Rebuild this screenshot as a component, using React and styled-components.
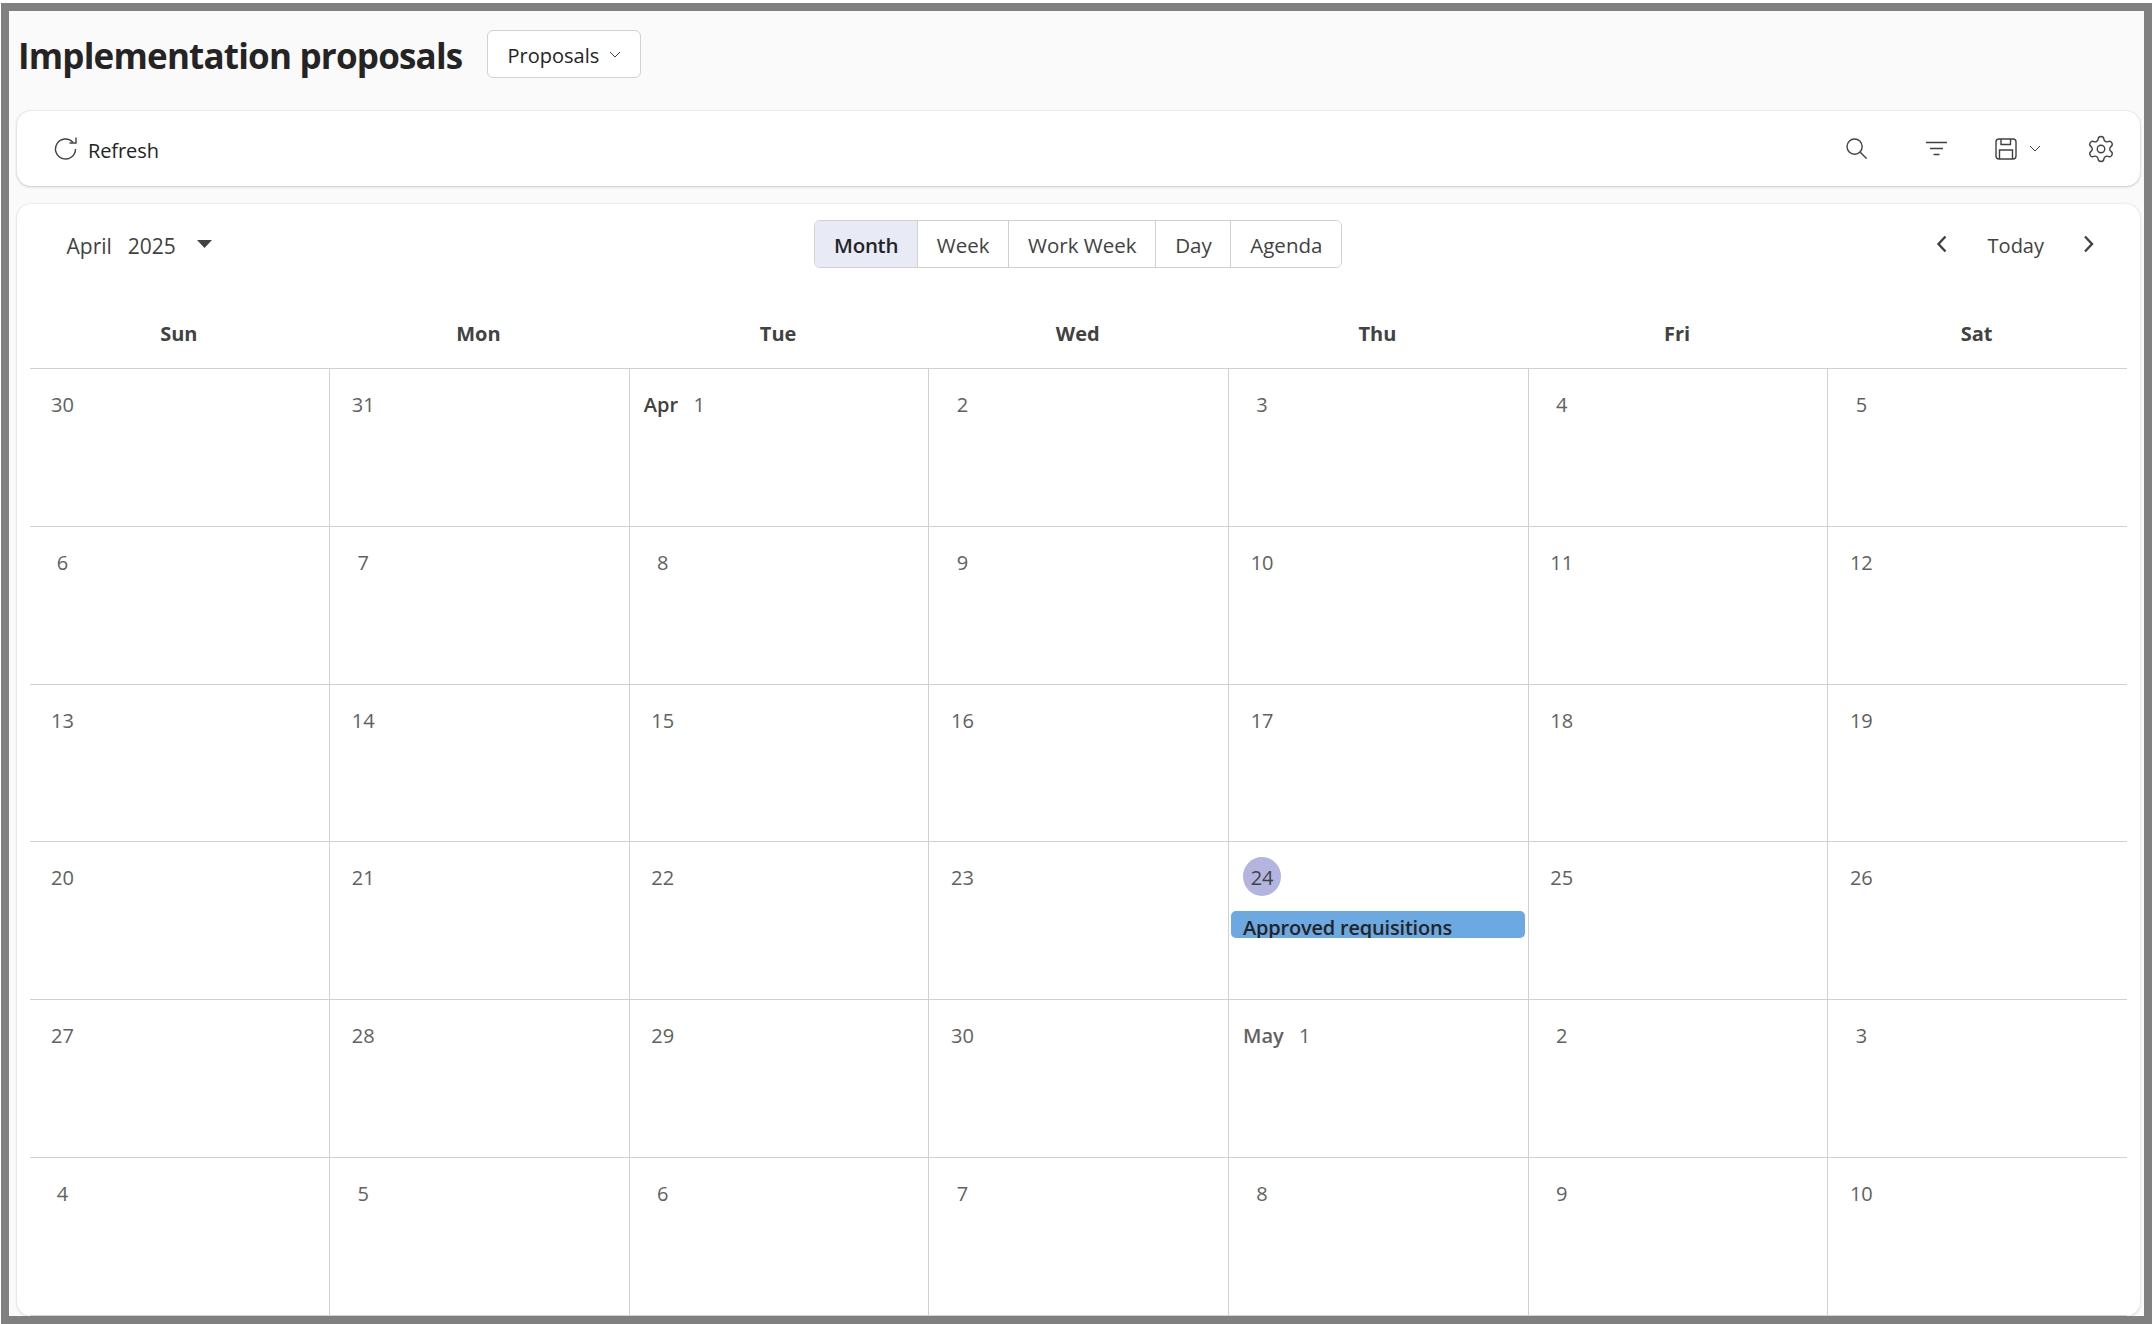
import React from "react";
import styled, { createGlobalStyle } from "styled-components";
import { Settings } from "lucide-react";

const GlobalStyle = createGlobalStyle`
  html, body {
    margin: 0;
    padding: 0;
    background: #fff;
  }
  * {
    box-sizing: border-box;
  }
  body {
    font-family: "Open Sans", "Noto Sans", "Liberation Sans", sans-serif;
    color: #242424;
  }
`;

const WEEKDAYS = ["Sun", "Mon", "Tue", "Wed", "Thu", "Fri", "Sat"];
const VIEWS = ["Month", "Week", "Work Week", "Day", "Agenda"];

const WEEKS = [
  [{ n: 30 }, { n: 31 }, { n: 1, month: "Apr" }, { n: 2 }, { n: 3 }, { n: 4 }, { n: 5 }],
  [{ n: 6 }, { n: 7 }, { n: 8 }, { n: 9 }, { n: 10 }, { n: 11 }, { n: 12 }],
  [{ n: 13 }, { n: 14 }, { n: 15 }, { n: 16 }, { n: 17 }, { n: 18 }, { n: 19 }],
  [
    { n: 20 },
    { n: 21 },
    { n: 22 },
    { n: 23 },
    { n: 24, today: true, event: "Approved requisitions" },
    { n: 25 },
    { n: 26 },
  ],
  [{ n: 27 }, { n: 28 }, { n: 29 }, { n: 30 }, { n: 1, month: "May", muted: true }, { n: 2 }, { n: 3 }],
  [{ n: 4 }, { n: 5 }, { n: 6 }, { n: 7 }, { n: 8 }, { n: 9 }, { n: 10 }],
];

export default function App() {
  return (
    <>
      <GlobalStyle />
      <Frame>
        <PageHeader>
          <Title>Implementation proposals</Title>
          <ViewPicker>
            <PickerText>Proposals</PickerText>
            <SmallChevron />
          </ViewPicker>
        </PageHeader>

        <Toolbar>
          <RefreshButton>
            <RefreshIcon />
            <RefreshText>Refresh</RefreshText>
          </RefreshButton>
          <ToolIcons>
            <IconSlot $w={21}>
              <SearchIcon />
            </IconSlot>
            <IconSlot $w={21} $left={59}>
              <FilterIcon />
            </IconSlot>
            <IconSlot $w={46} $left={48}>
              <SaveIcon />
              <SmallChevron />
            </IconSlot>
            <IconSlot $w={24} $left={48}>
              <GearIcon size={30} strokeWidth={1.1} color="#424242" />
            </IconSlot>
          </ToolIcons>
        </Toolbar>

        <CalendarCard>
          <NavRow>
            <MonthPicker>
              <span>April</span>
              <span>2025</span>
              <Caret />
            </MonthPicker>
            <ViewSwitch>
              {VIEWS.map((v, i) => (
                <ViewButton key={v} $active={i === 0}>
                  {v}
                </ViewButton>
              ))}
            </ViewSwitch>
            <DateNav>
              <NavChevron d="M11.5 1.5 L4.5 9 L11.5 16.5" />
              <TodayLabel>Today</TodayLabel>
              <NavChevron d="M5 1.5 L12 9 L5 16.5" />
            </DateNav>
          </NavRow>

          <WeekHeader>
            {WEEKDAYS.map((d) => (
              <WeekdayCell key={d}>{d}</WeekdayCell>
            ))}
          </WeekHeader>

          <MonthGrid>
            {WEEKS.map((week, w) =>
              week.map((day, d) => (
                <DayCell key={`${w}-${d}`} $first={d === 0}>
                  <DayHead>
                    {day.month && <MonthTag $muted={day.muted}>{day.month}</MonthTag>}
                    <DayNumber $today={day.today}>{day.n}</DayNumber>
                  </DayHead>
                  {day.event && <EventBar>{day.event}</EventBar>}
                </DayCell>
              ))
            )}
          </MonthGrid>
        </CalendarCard>
      </Frame>
    </>
  );
}

function Svg({ w, h, children }) {
  return (
    <svg
      width={w}
      height={h}
      viewBox={`0 0 ${w} ${h}`}
      fill="none"
      stroke="#424242"
      strokeWidth="1.4"
      style={{ display: "block", flexShrink: 0 }}
    >
      {children}
    </svg>
  );
}

function SmallChevron() {
  return (
    <Svg w={12} h={7}>
      <path d="M1 1 L6 6 L11 1" strokeWidth="1" />
    </Svg>
  );
}

function RefreshIcon() {
  return (
    <Svg w={24} h={24}>
      <path d="M19 5.4 A10 10 0 1 0 21.5 12" />
      <path d="M22 0.5 V6 H15.5" />
    </Svg>
  );
}

function SearchIcon() {
  return (
    <Svg w={21} h={21}>
      <circle cx="8.6" cy="8.6" r="7.6" />
      <path d="M14 14 L20.6 20.6" />
    </Svg>
  );
}

function FilterIcon() {
  return (
    <Svg w={21} h={15}>
      <path d="M0 1.5 H21 M4 7.5 H17 M7.5 13.5 H13.5" />
    </Svg>
  );
}

function SaveIcon() {
  return (
    <Svg w={22} h={22}>
      <rect x="1" y="1" width="20" height="20" rx="3" />
      <path d="M6 1 V6.5 H15.5 V1" />
      <path d="M4.5 21 V12 H17.5 V21" />
    </Svg>
  );
}

function Caret() {
  return (
    <CaretBox>
      <svg width="15" height="8" viewBox="0 0 15 8" style={{ display: "block" }}>
        <path d="M0 0 H15 L7.5 8 Z" fill="#424242" />
      </svg>
    </CaretBox>
  );
}

function NavChevron({ d }) {
  return (
    <svg width="18" height="18" viewBox="0 0 18 18" fill="none" stroke="#424242" strokeWidth="2.4" style={{ display: "block" }}>
      <path d={d} />
    </svg>
  );
}

const Frame = styled.div`
  margin: 3px 2px 0 1px;
  height: 1321px;
  border: 8px solid #808080;
  background: #fafafa;
  padding: 0 4px 0 8px;
  display: flex;
  flex-direction: column;
  overflow: hidden;
`;

const PageHeader = styled.div`
  height: 100px;
  flex-shrink: 0;
  padding: 19px 0 0 1px;
  display: flex;
  align-items: flex-start;
  gap: 25px;
`;

const Title = styled.h1`
  margin: 2px 0 0;
  font-size: 35px;
  line-height: 47px;
  font-weight: 700;
  letter-spacing: -0.8px;
  color: #242424;
  white-space: nowrap;
`;

const ViewPicker = styled.button`
  width: 154px;
  height: 48px;
  display: flex;
  align-items: center;
  justify-content: center;
  gap: 10px;
  background: #fff;
  border: 1px solid #d1d1d1;
  border-radius: 6px;
  font: 500 20px "Open Sans", sans-serif;
  color: #242424;
  padding: 0;
`;

const PickerText = styled.span`
  padding-top: 2px;
`;

const Toolbar = styled.div`
  height: 75px;
  flex-shrink: 0;
  margin-bottom: 18px;
  background: #fff;
  border-radius: 14px;
  box-shadow: 0 0 2px rgba(0, 0, 0, 0.14), 0 1px 3px rgba(0, 0, 0, 0.16);
  display: flex;
  align-items: center;
  justify-content: space-between;
  padding: 0 27px 0 37px;
`;

const RefreshButton = styled.div`
  display: flex;
  align-items: center;
  gap: 10px;
  font-size: 20px;
  color: #242424;
`;

const RefreshText = styled.span`
  padding-top: 3px;
  letter-spacing: -0.1px;
`;

const ToolIcons = styled.div`
  display: flex;
  align-items: center;
`;

const IconSlot = styled.div`
  width: ${(p) => p.$w}px;
  margin-left: ${(p) => p.$left || 0}px;
  display: flex;
  align-items: center;
  justify-content: space-between;
`;

const GearIcon = styled(Settings)`
  display: block;
  flex-shrink: 0;
  margin: 0 -3px;
`;

const CalendarCard = styled.div`
  flex: 1;
  min-height: 0;
  background: #fff;
  border-radius: 14px;
  box-shadow: 0 0 2px rgba(0, 0, 0, 0.14), 0 1px 3px rgba(0, 0, 0, 0.1);
  padding: 16px 13px 0 12.5px;
  display: flex;
  flex-direction: column;
`;

const NavRow = styled.div`
  display: grid;
  grid-template-columns: 1fr auto 1fr;
  align-items: center;
  height: 48px;
  flex-shrink: 0;
`;

const MonthPicker = styled.div`
  display: flex;
  align-items: center;
  gap: 16px;
  padding: 3px 0 0 37px;
  font-size: 21px;
  color: #424242;
`;

const CaretBox = styled.span`
  margin: -3px 0 0 5px;
  display: block;
`;

const ViewSwitch = styled.div`
  display: flex;
  height: 48px;
  border: 1px solid #d1d1d1;
  border-radius: 6px;
  overflow: hidden;
`;

const ViewButton = styled.div`
  display: flex;
  align-items: center;
  padding: 2px 18.8px 0;
  font-size: 20.5px;
  font-weight: ${(p) => (p.$active ? 600 : 400)};
  letter-spacing: ${(p) => (p.$active ? "-0.3px" : "0")};
  color: ${(p) => (p.$active ? "#242424" : "#424242")};
  background: ${(p) => (p.$active ? "#e8ebf6" : "#fff")};
  & + & {
    border-left: 1px solid #d1d1d1;
  }
`;

const DateNav = styled.div`
  justify-self: end;
  display: flex;
  align-items: center;
  gap: 36px;
  padding-right: 29px;
`;

const TodayLabel = styled.span`
  padding-top: 3px;
  font-size: 20px;
  color: #424242;
`;

const WeekHeader = styled.div`
  display: grid;
  grid-template-columns: repeat(7, 1fr);
  height: 101px;
  flex-shrink: 0;
  padding-top: 47px;
  border-bottom: 1px solid #d1d1d1;
`;

const WeekdayCell = styled.div`
  padding-right: 1px;
  text-align: center;
  font-size: 20px;
  line-height: 38px;
  font-weight: 700;
  color: #424242;
`;

const MonthGrid = styled.div`
  display: grid;
  grid-template-columns: repeat(7, 1fr);
  grid-auto-rows: 157.8px;
`;

const DayCell = styled.div`
  border-bottom: 1px solid #d1d1d1;
  border-left: ${(p) => (p.$first ? "none" : "1px solid #d1d1d1")};
  padding: 15px 3px 0 2px;
  overflow: hidden;
`;

const DayHead = styled.div`
  display: flex;
  align-items: center;
  height: 39px;
  padding-left: 12px;
  gap: 4px;
`;

const MonthTag = styled.span`
  font-size: 20px;
  font-weight: 600;
  color: ${(p) => (p.$muted ? "#616161" : "#424242")};
  margin-right: -2px;
  padding-top: 2px;
`;

const DayNumber = styled.span`
  width: 38px;
  height: 39px;
  padding-top: 2px;
  border-radius: 50%;
  display: flex;
  align-items: center;
  justify-content: center;
  font-size: 20px;
  color: ${(p) => (p.$today ? "#424242" : "#616161")};
  background: ${(p) => (p.$today ? "#b4b4e0" : "transparent")};
`;

const EventBar = styled.div`
  margin-top: 15px;
  height: 27px;
  border-radius: 5px;
  background: #6ca8e2;
  padding-left: 12px;
  font-size: 20px;
  letter-spacing: -0.2px;
  line-height: 34px;
  font-weight: 600;
  color: #242424;
  overflow: hidden;
  white-space: nowrap;
`;
